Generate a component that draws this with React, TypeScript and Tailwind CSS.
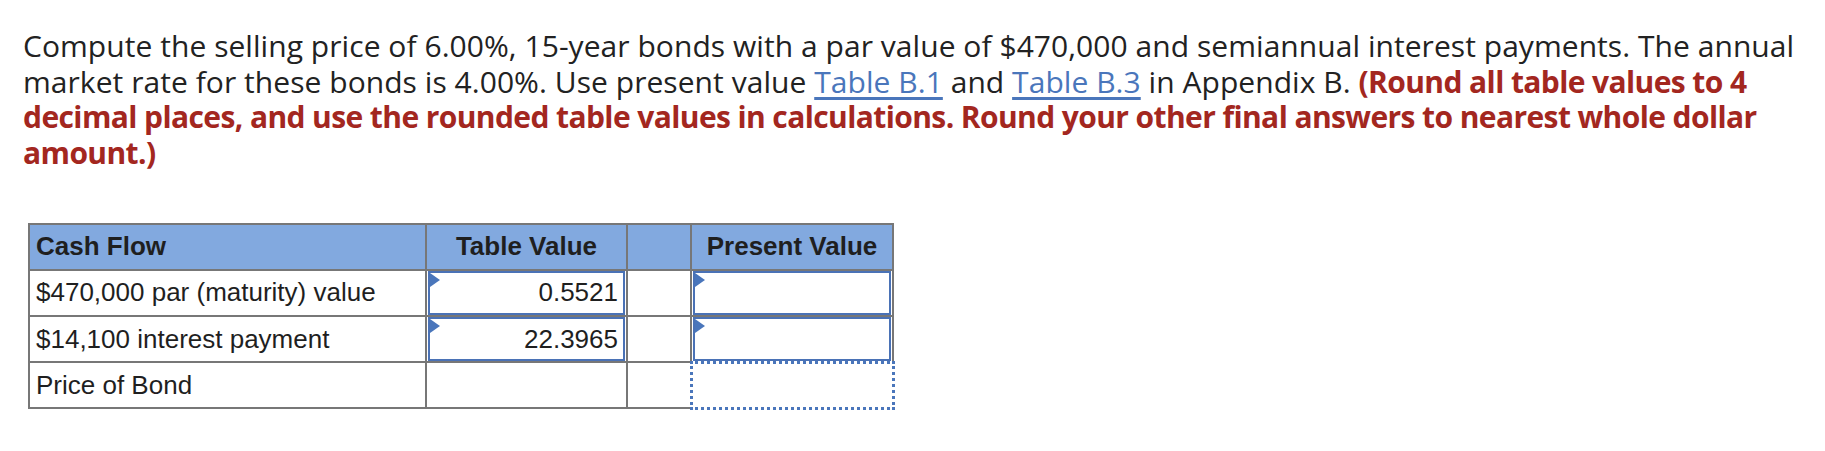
import React from "react";

function Marker() {
  return (
    <span className="absolute left-0 top-0 h-0 w-0 border-y-[7px] border-l-[10px] border-y-transparent border-l-[#4a76bb]" />
  );
}

function InputBox({ value }: { value?: string }) {
  return (
    <div className="relative mx-[1px] flex h-[44px] items-center justify-end border-2 border-[#4a72b6] bg-white pr-[5px]">
      <Marker />
      {value}
    </div>
  );
}

export default function App() {
  const cell = "border-2 border-[#777777]";

  return (
    <div className="min-h-[451px] bg-white px-[23px] pt-[28px]">
      <p
        className="max-w-[1790px] text-[30px] leading-[35.7px] tracking-[0.05px] text-[#222222]"
        style={{ fontFamily: "'Open Sans', sans-serif" }}
      >
        Compute the selling price of 6.00%, 15-year bonds with a par value of $470,000 and semiannual
        interest payments. The annual market rate for these bonds is 4.00%. Use present value{" "}
        <a className="text-[#4a76bb] underline underline-offset-4">Table B.1</a> and{" "}
        <a className="text-[#4a76bb] underline underline-offset-4">Table B.3</a> in Appendix B.{" "}
        <strong className="font-bold tracking-[-0.6px] text-[#a3271f]">
          (Round all table values to 4 decimal places, and use the rounded table values in
          calculations. Round your other final answers to nearest whole dollar amount.)
        </strong>
      </p>

      <table
        className="ml-[5px] mt-[52px] w-[864px] table-fixed border-collapse text-[26px] text-[#1f1f1f]"
        style={{ fontFamily: "'Liberation Sans', Arial, sans-serif" }}
      >
        <colgroup>
          <col className="w-[397px]" />
          <col className="w-[201px]" />
          <col className="w-[64px]" />
          <col className="w-[202px]" />
        </colgroup>
        <thead>
          <tr className="h-[46px] bg-[#82a9df]">
            <th className={`${cell} px-[6px] text-left font-bold`}>Cash Flow</th>
            <th className={`${cell} text-center font-bold`}>Table Value</th>
            <th className={cell}></th>
            <th className={`${cell} text-center font-bold`}>Present Value</th>
          </tr>
        </thead>
        <tbody>
          <tr className="h-[46px]">
            <td className={`${cell} px-[6px]`}>$470,000 par (maturity) value</td>
            <td className={`${cell} p-0`}>
              <InputBox value="0.5521" />
            </td>
            <td className={cell}></td>
            <td className={`${cell} p-0`}>
              <InputBox />
            </td>
          </tr>
          <tr className="h-[46px]">
            <td className={`${cell} px-[6px]`}>$14,100 interest payment</td>
            <td className={`${cell} p-0`}>
              <InputBox value="22.3965" />
            </td>
            <td className={cell}></td>
            <td className={`${cell} p-0`}>
              <InputBox />
            </td>
          </tr>
          <tr className="h-[46px]">
            <td className={`${cell} px-[6px]`}>Price of Bond</td>
            <td className={cell}></td>
            <td className={cell}></td>
            <td className="border-[3px] border-dotted border-[#4a76bb]"></td>
          </tr>
        </tbody>
      </table>
    </div>
  );
}
